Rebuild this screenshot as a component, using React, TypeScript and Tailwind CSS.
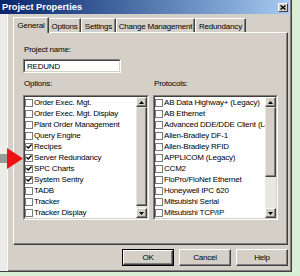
import React from "react";

const leftItems: [string, boolean][] = [
  ["Order Exec. Mgt.", false],
  ["Order Exec. Mgt. Display", false],
  ["Plant Order Management", false],
  ["Query Engine", false],
  ["Recipes", true],
  ["Server Redundancy", true],
  ["SPC Charts", true],
  ["System Sentry", true],
  ["TADB", false],
  ["Tracker", false],
  ["Tracker Display", false],
];

const rightItems: [string, boolean][] = [
  ["AB Data Highway+ (Legacy)", false],
  ["AB Ethernet", false],
  ["Advanced DDE/DDE Client (Legacy)", false],
  ["Allen-Bradley DF-1", false],
  ["Allen-Bradley RFID", false],
  ["APPLICOM (Legacy)", false],
  ["CCM2", false],
  ["FloPro/FloNet Ethernet", false],
  ["Honeywell IPC 620", false],
  ["Mitsubishi Serial", false],
  ["Mitsubishi TCP/IP", false],
];

function Check({ on }: { on: boolean }) {
  return (
    <div className="w-[8px] h-[8px] shrink-0 bg-white border border-[#7a7a7a] flex items-center justify-center">
      {on && (
        <svg width="7" height="7" viewBox="0 0 7 7">
          <path d="M0.5 3.2 L2.6 5.3 L6.5 1.2" stroke="#000" strokeWidth="1.6" fill="none" />
        </svg>
      )}
    </div>
  );
}

function ArrowBtn({ up }: { up: boolean }) {
  return (
    <div className="w-[11px] h-[10px] bg-[#d4d0c8] border-t border-l border-[#ffffff] border-r border-b border-r-[#404040] border-b-[#404040] shadow-[inset_-1px_-1px_0_#808080] flex items-center justify-center">
      <svg width="5" height="3" viewBox="0 0 5 3">
        {up ? <path d="M0 3 L2.5 0 L5 3 Z" fill="#000" /> : <path d="M0 0 L2.5 3 L5 0 Z" fill="#000" />}
      </svg>
    </div>
  );
}

function ListBox({ items, width, thumbTop, thumbH }: { items: [string, boolean][]; width: string; thumbTop: number; thumbH: number }) {
  return (
    <div className={`${width} h-[125px] bg-white border border-[#808080] border-r-[#ffffff] border-b-[#ffffff] flex`}>
      <div className="flex-1 flex border border-[#404040] border-r-[#d4d0c8] border-b-[#d4d0c8] min-w-0">
        <div className="flex-1 flex flex-col min-w-0 overflow-hidden">
          {items.map(([t, on]) => (
            <div key={t} className="h-[11px] flex items-center gap-[1px] whitespace-nowrap">
              <Check on={on} />
              <span className="leading-[11px]">{t}</span>
            </div>
          ))}
        </div>
        <div className="w-[11px] shrink-0 flex flex-col bg-[#e9e7e2]">
          <ArrowBtn up />
          <div className="flex-1 flex flex-col">
            <div style={{ height: thumbTop }} />
            <div
              className="w-[11px] bg-[#d4d0c8] border-t border-l border-[#e8e6e1] border-r border-b border-r-[#404040] border-b-[#404040] shadow-[inset_-1px_-1px_0_#808080]"
              style={{ height: thumbH }}
            />
          </div>
          <ArrowBtn up={false} />
        </div>
      </div>
    </div>
  );
}

function Tab({ label, active, w }: { label: string; active?: boolean; w: string }) {
  return (
    <div
      className={`${w} ${active ? "h-[16px] -mb-[1px] z-10 -ml-[2px] -mr-[1px] bg-[#d4d0c8]" : "h-[14px] mt-[2px] bg-[#d4d0c8]"} shrink-0 border-t border-l border-[#ffffff] border-r border-r-[#404040] rounded-t-[1px] flex items-start justify-center pt-[2px] shadow-[inset_-1px_0_0_#808080] whitespace-nowrap`}
    >
      {label}
    </div>
  );
}

function Button({ label, def }: { label: string; def?: boolean }) {
  return (
    <div className={`w-[52px] h-[17px] ${def ? "border border-[#000]" : ""}`}>
      <div className="w-full h-full bg-[#d4d0c8] border-t border-l border-[#ffffff] border-r border-b border-r-[#404040] border-b-[#404040] shadow-[inset_-1px_-1px_0_#808080] flex items-center justify-center">
        {label}
      </div>
    </div>
  );
}

export default function App() {
  return (
    <div className="w-[300px] h-[276px] bg-[#daeed6] relative overflow-hidden font-['Liberation_Sans',Arial,sans-serif] text-[8px] tracking-[-0.2px] text-black">
      <div className="w-[292px] h-[272px] flex flex-col bg-[#d4d0c8] border-r border-b border-[#404040] shadow-[inset_-1px_-1px_0_#808080]">
        <div className="h-[14px] mr-[2px] flex items-center justify-between bg-gradient-to-r from-[#0a246a] to-[#a6caf0]">
          <span className="pl-[2px] text-white font-bold text-[9.3px] tracking-[0px] leading-[14px]">Project Properties</span>
          <div className="w-[10px] h-[9px] mr-[1px] bg-[#d4d0c8] border-t border-l border-white border-r border-b border-r-[#404040] border-b-[#404040] flex items-center justify-center">
            <svg width="6" height="5" viewBox="0 0 6 5">
              <path d="M0.5 0.5 L5.5 4.5 M5.5 0.5 L0.5 4.5" stroke="#000" strokeWidth="1.4" />
            </svg>
          </div>
        </div>
        <div className="flex flex-1">
          <div className="w-[8px] bg-[#ecece8] border-r border-[#fafafa]" />
          <div className="flex-1 flex flex-col pl-[5px] pr-[3px] pt-[3px]">
            <div className="flex pl-[2px] h-[15px] items-end">
              <Tab label="General" active w="w-[36px]" />
              <Tab label="Options" w="w-[33px]" />
              <Tab label="Settings" w="w-[35px]" />
              <Tab label="Change Management" w="w-[79px]" />
              <Tab label="Redundancy" w="w-[51px]" />
            </div>
            <div className="w-[275px] h-[213px] border-t border-l border-white border-r border-b border-r-[#404040] border-b-[#404040] shadow-[inset_-1px_-1px_0_#808080] pl-[9px] pt-[11px] flex flex-col">
              <div className="h-[11px] leading-[11px] pl-[1px]">Project name:</div>
              <div className="mt-[4px] w-[98px] h-[14px] bg-white border border-[#808080] border-r-white border-b-white">
                <div className="w-full h-full border border-[#404040] border-r-[#d4d0c8] border-b-[#d4d0c8] pl-[2px] leading-[11px]">REDUND</div>
              </div>
              <div className="mt-[5px] flex h-[11px] leading-[11px]">
                <div className="w-[130px] pl-[1px]">Options:</div>
                <div className="pl-[1px]">Protocols:</div>
              </div>
              <div className="mt-[6px] flex gap-[4px]">
                <ListBox items={leftItems} width="w-[126px]" thumbTop={0} thumbH={99} />
                <ListBox items={rightItems} width="w-[125px]" thumbTop={0} thumbH={70} />
              </div>
            </div>
            <div className="flex justify-end gap-[5px] mt-[4px]">
              <Button label="OK" def />
              <Button label="Cancel" />
              <Button label="Help" />
            </div>
          </div>
        </div>
      </div>
      <div className="absolute left-0 top-[154px] w-[8px] h-[9px] bg-[#9a9a9a]" />
      <svg className="absolute left-[7px] top-[148px]" width="17" height="21" viewBox="0 0 17 21">
        <path d="M0 0 L16 10.5 L0 21 Z" fill="#ee1111" />
      </svg>
    </div>
  );
}
